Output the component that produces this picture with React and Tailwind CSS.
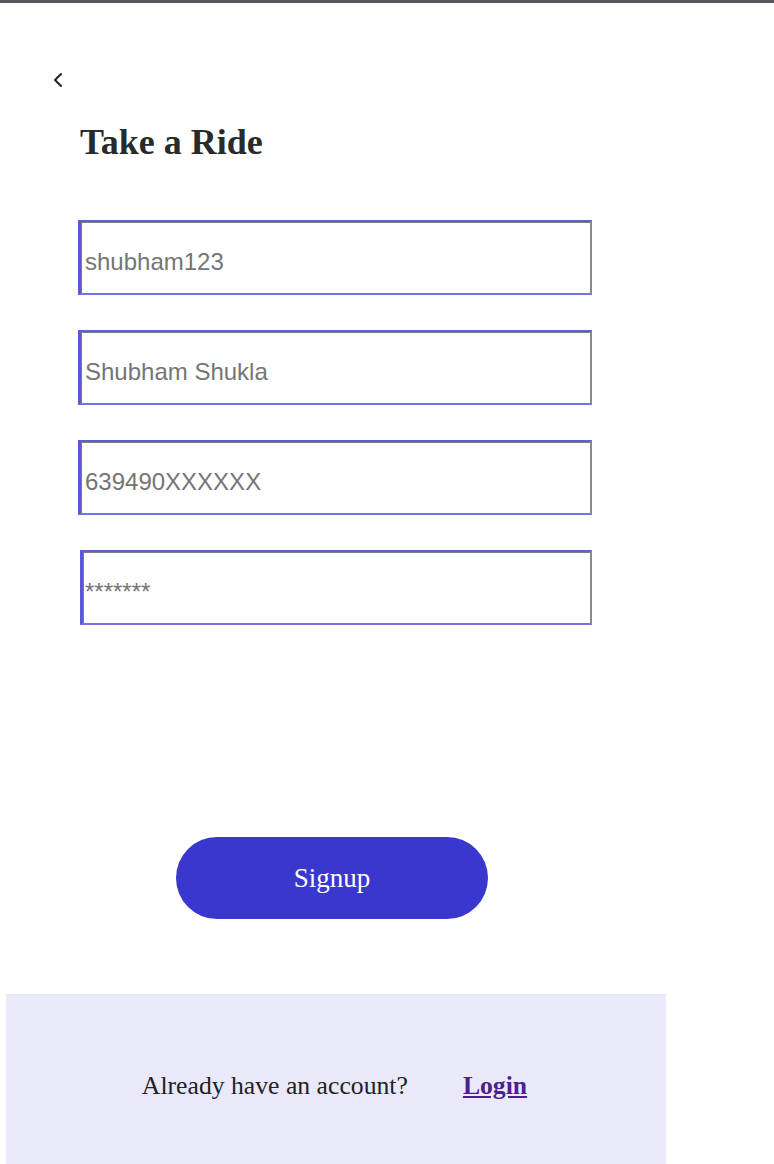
import React from "react";
import { ChevronLeft } from "lucide-react";

const fields = [
  { placeholder: "shubham123", shift: "ml-[78px] w-[514px] pl-[4px]" },
  { placeholder: "Shubham Shukla", shift: "ml-[78px] w-[514px] pl-[4px]" },
  { placeholder: "639490XXXXXX", shift: "ml-[78px] w-[514px] pl-[4px]" },
  { placeholder: "*******", shift: "ml-[80px] w-[512px] pl-[2px]" },
];

const App = () => {
  return (
    <div className="min-h-[1164px] w-full bg-white overflow-hidden">
      {/* top strip */}
      <div className="h-[3px] w-full bg-[#58585c]" />

      <div className="w-[664px]">
        {/* back */}
        <button className="ml-[46px] mt-[65px] block h-6 w-6 text-[#222]">
          <ChevronLeft size={24} strokeWidth={2} />
        </button>

        <h1 className="ml-[80px] mt-[32px] text-[36px] leading-none font-bold text-[#2a2a2a] font-['Liberation_Serif',serif]">
          Take a Ride
        </h1>

        {/* form */}
        <form className="mt-[60px] flex flex-col gap-[35px]">
          {fields.map((f, i) => (
            <input
              key={i}
              type="text"
              placeholder={f.placeholder}
              className={`${f.shift} block h-[75px] pt-[8px] text-[24px] font-['Liberation_Sans',Arial,sans-serif] text-[#333] placeholder:text-[#757575] outline-none border-solid border-t-2 border-l-[3px] border-r-2 border-b-2 border-t-[#5f5fd4] border-l-[#5a5ad0] border-r-[#8a8a8a] border-b-[#7272e4] shadow-[inset_1px_1px_0_#7c7c7c]`}
            />
          ))}
        </form>

        {/* signup */}
        <div className="mt-[212px] flex justify-center">
          <button className="h-[82px] w-[312px] rounded-full bg-[#3937cd] text-white text-[27px] font-['Liberation_Serif',serif]">
            Signup
          </button>
        </div>
      </div>

      {/* footer */}
      <div className="ml-[6px] mt-[75px] flex h-[184px] w-[660px] items-center justify-center gap-[55px] pr-[3px] bg-[#eae9f9] font-['Liberation_Serif',serif] text-[25.7px]">
        <span className="text-[#222]">Already have an account?</span>
        <a href="#" className="font-bold text-[#4f1f8e] underline">
          Login
        </a>
      </div>
    </div>
  );
};

export default App;
